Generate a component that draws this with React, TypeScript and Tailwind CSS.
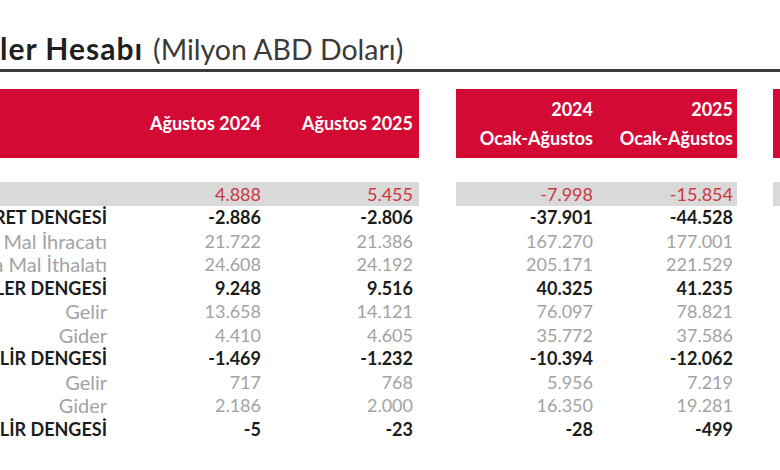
import React from 'react';

type Row = {
  label: string;
  values: string[];
  kind: 'total' | 'main' | 'sub';
};

const rows: Row[] = [
  { label: 'CARİ İŞLEMLER HESABI', values: ['4.888', '5.455', '-7.998', '-15.854'], kind: 'total' },
  { label: 'DIŞ TİCARET DENGESİ', values: ['-2.886', '-2.806', '-37.901', '-44.528'], kind: 'main' },
  { label: 'FOB Bazında Mal İhracatı', values: ['21.722', '21.386', '167.270', '177.001'], kind: 'sub' },
  { label: 'CIF Bazında Mal İthalatı', values: ['24.608', '24.192', '205.171', '221.529'], kind: 'sub' },
  { label: 'HİZMETLER DENGESİ', values: ['9.248', '9.516', '40.325', '41.235'], kind: 'main' },
  { label: 'Gelir', values: ['13.658', '14.121', '76.097', '78.821'], kind: 'sub' },
  { label: 'Gider', values: ['4.410', '4.605', '35.772', '37.586'], kind: 'sub' },
  { label: 'BİRİNCİL GELİR DENGESİ', values: ['-1.469', '-1.232', '-10.394', '-12.062'], kind: 'main' },
  { label: 'Gelir', values: ['717', '768', '5.956', '7.219'], kind: 'sub' },
  { label: 'Gider', values: ['2.186', '2.000', '16.350', '19.281'], kind: 'sub' },
  { label: 'İKİNCİL GELİR DENGESİ', values: ['-5', '-23', '-28', '-499'], kind: 'main' },
];

const textTone = {
  total: 'text-[#c93a3f]',
  main: 'text-[#1c1c1c] font-bold',
  sub: 'text-[#a3a3a3]',
};

function DataRow({ row }: { row: Row }) {
  const isTotal = row.kind === 'total';
  const bg = isTotal ? 'bg-[#d9d9d9]' : '';
  const h = isTotal ? 'h-[24px] leading-[24px]' : 'h-[23.5px] leading-[23.5px]';
  const tone = textTone[row.kind];
  const labelSize = row.kind === 'sub' ? 'text-[20px]' : '';
  return (
    <div className={`flex text-[18px] whitespace-nowrap ${h}`}>
      <div className={`flex shrink-0 ${bg}`}>
        {isTotal ? (
          <div className="w-[362px] shrink-0 pl-1 font-bold text-[#1c1c1c]">{row.label}</div>
        ) : (
          <div className={`w-[362px] shrink-0 flex justify-end pr-[5px] ${labelSize} ${tone}`}>{row.label}</div>
        )}
        <div className={`w-[155px] shrink-0 text-right pr-[6px] ${tone}`}>{row.values[0]}</div>
        <div className={`w-[152px] shrink-0 text-right pr-[6px] ${tone}`}>{row.values[1]}</div>
      </div>
      <div className="w-[37px] shrink-0" />
      <div className={`flex shrink-0 ${bg}`}>
        <div className={`w-[142px] shrink-0 text-right pr-[5px] ${tone}`}>{row.values[2]}</div>
        <div className={`w-[139px] shrink-0 text-right pr-[4px] ${tone}`}>{row.values[3]}</div>
      </div>
      <div className="w-[36px] shrink-0" />
      <div className={`w-[200px] shrink-0 ${bg}`} />
    </div>
  );
}

export default function App() {
  return (
    <div className="w-[780px] h-[470px] overflow-hidden bg-white font-['Lato','Open_Sans',sans-serif]">
      {/* Title */}
      <div className="mt-[30px] flex items-baseline leading-[36px] whitespace-nowrap">
        <div className="w-0 flex justify-end text-[30px] tracking-[1px] font-bold text-[#1f1f1f]">Cari İşlem</div>
        <span className="text-[30px] tracking-[1px] font-bold text-[#1f1f1f]">ler Hesabı</span>
        <span className="ml-[10px] text-[28.5px] text-[#3a3a3a]">(Milyon ABD Doları)</span>
      </div>
      <div className="mt-[2px] h-[3px] bg-[#3b3b3b]" />

      {/* Table */}
      <div className="w-[1300px] -ml-[250px] mt-[17px]">
        <div className="flex h-[69px] text-[18px] font-bold text-white whitespace-nowrap">
          <div className="flex shrink-0 items-center bg-[#d20a34]">
            <div className="w-[362px] shrink-0" />
            <div className="w-[155px] shrink-0 text-right pr-[6px]">Ağustos 2024</div>
            <div className="w-[152px] shrink-0 text-right pr-[6px]">Ağustos 2025</div>
          </div>
          <div className="w-[37px] shrink-0" />
          <div className="flex shrink-0 items-center bg-[#d20a34] leading-[29px]">
            <div className="w-[142px] shrink-0 text-right pr-[5px]">
              <div>2024</div>
              <div>Ocak-Ağustos</div>
            </div>
            <div className="w-[139px] shrink-0 text-right pr-[4px]">
              <div>2025</div>
              <div>Ocak-Ağustos</div>
            </div>
          </div>
          <div className="w-[36px] shrink-0" />
          <div className="w-[200px] shrink-0 bg-[#d20a34]" />
        </div>
        <div className="h-[24px]" />
        {rows.map((r, i) => (
          <DataRow key={i} row={r} />
        ))}
      </div>
    </div>
  );
}
